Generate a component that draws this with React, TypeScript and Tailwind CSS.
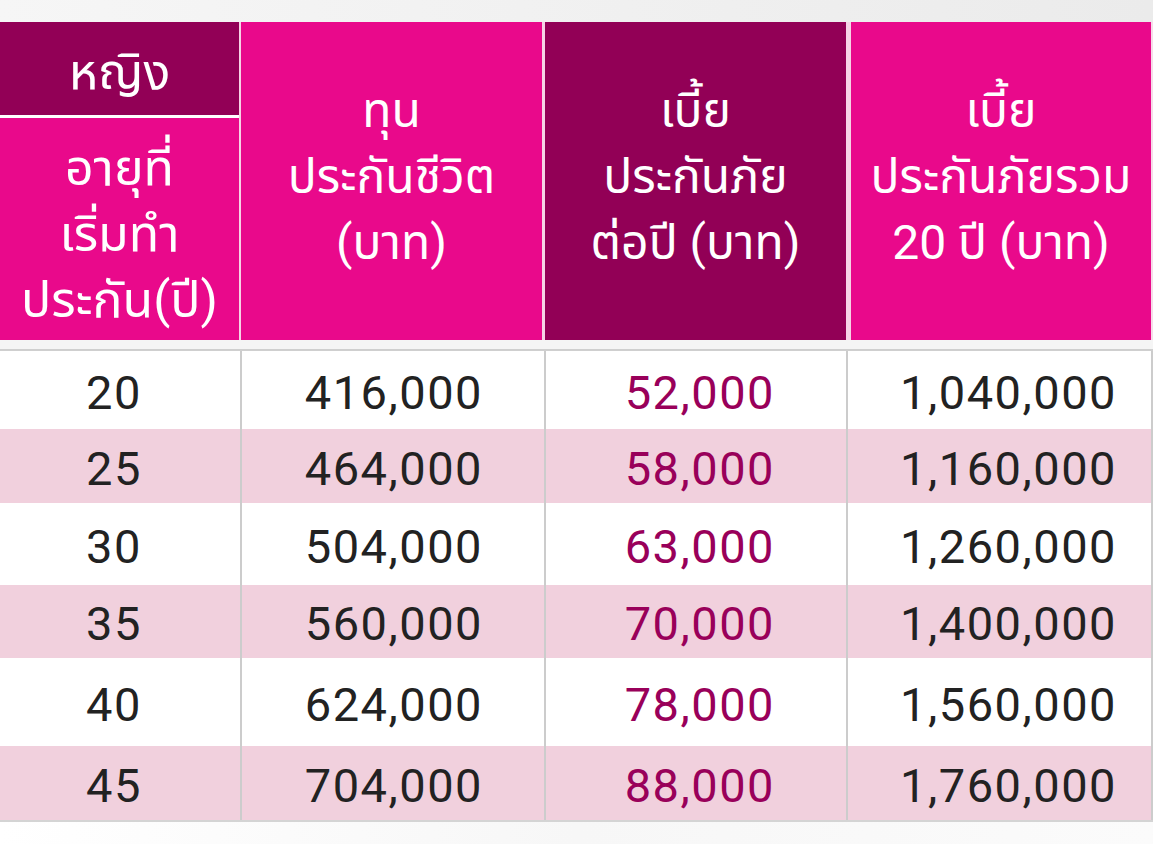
import React from "react";

// rates table, women
const rows = [
  { age: "20", sum: "416,000", year: "52,000", total: "1,040,000", h: "h-[78px]", bg: "bg-white" },
  { age: "25", sum: "464,000", year: "58,000", total: "1,160,000", h: "h-[74px]", bg: "bg-[#f1d0dd]" },
  { age: "30", sum: "504,000", year: "63,000", total: "1,260,000", h: "h-[82px]", bg: "bg-white" },
  { age: "35", sum: "560,000", year: "70,000", total: "1,400,000", h: "h-[73px]", bg: "bg-[#f1d0dd]" },
  { age: "40", sum: "624,000", year: "78,000", total: "1,560,000", h: "h-[88px]", bg: "bg-white" },
  { age: "45", sum: "704,000", year: "88,000", total: "1,760,000", h: "h-[74px]", bg: "bg-[#f1d0dd]" },
];

const thai = { fontFamily: "Roboto, 'Noto Sans Thai', 'Noto Sans', sans-serif" };

const App: React.FC = () => {
  return (
    <div className="flex h-[844px] w-[1153px] flex-col overflow-hidden bg-[#f7f7f7]" style={thai}>
      <div className="h-[22px] bg-gradient-to-r from-[#f6f6f6] to-[#ebebeb]"></div>

      {/* header */}
      <div className="flex h-[318px] bg-[#f6d3e6] text-[48px] leading-[66px] text-white">
        <div className="flex w-[239px] flex-col gap-[3px] bg-white">
          <div className="flex h-[93px] items-center justify-center bg-[#920056] pt-[6px] text-[50px]">หญิง</div>
          <div className="flex flex-1 flex-col items-center justify-center bg-[#e9098b] pt-[10px] text-center text-[50px]">
            <span>อายุที่</span>
            <span>เริ่มทำ</span>
            <span>ประกัน(ปี)</span>
          </div>
        </div>
        <div className="ml-[2px] flex w-[301px] flex-col items-center justify-center bg-[#e9098b] pb-[8px] text-center">
          <span>ทุน</span>
          <span>ประกันชีวิต</span>
          <span>(บาท)</span>
        </div>
        <div className="ml-[3px] flex w-[301px] flex-col items-center justify-center bg-[#920056] pb-[8px] text-center">
          <span>เบี้ย</span>
          <span>ประกันภัย</span>
          <span>ต่อปี (บาท)</span>
        </div>
        <div className="ml-[5px] flex w-[300px] flex-col items-center justify-center bg-[#e9098b] pb-[8px] text-center">
          <span>เบี้ย</span>
          <span>ประกันภัยรวม</span>
          <span>20 ปี (บาท)</span>
        </div>
        <div className="flex-1 bg-[#f6dbe9]"></div>
      </div>

      <div className="h-[9px] bg-[#f5f5f5]"></div>
      <div className="h-[2px] bg-[#cfcfcf]"></div>

      {/* body */}
      <div className="flex flex-col text-[47px] tracking-[1.5px] text-[#222222]">
        {rows.map((r, idx) => (
          <div key={idx} className={`flex ${r.h} ${r.bg}`}>
            <div className="flex w-[240px] items-center justify-center pr-[12px] pt-[6px]">{r.age}</div>
            <div className="w-[2px] bg-[#cccccc]"></div>
            <div className="flex w-[302px] items-center justify-end pr-[61px] pt-[6px]">{r.sum}</div>
            <div className="w-[2px] bg-[#cccccc]"></div>
            <div className="flex w-[300px] items-center justify-end pr-[71px] pt-[6px] text-[#99005a]">{r.year}</div>
            <div className="w-[2px] bg-[#cccccc]"></div>
            <div className="flex w-[303px] items-center justify-end pr-[34px] pt-[6px]">{r.total}</div>
            <div className="w-[2px] bg-[#cccccc]"></div>
          </div>
        ))}
      </div>
      <div className="h-[2px] bg-[#d4d4d4]"></div>
      <div className="flex-1 bg-gradient-to-r from-[#ffffff] via-[#f7f7f7] to-[#fbfbfb]"></div>
    </div>
  );
};

export default App;
